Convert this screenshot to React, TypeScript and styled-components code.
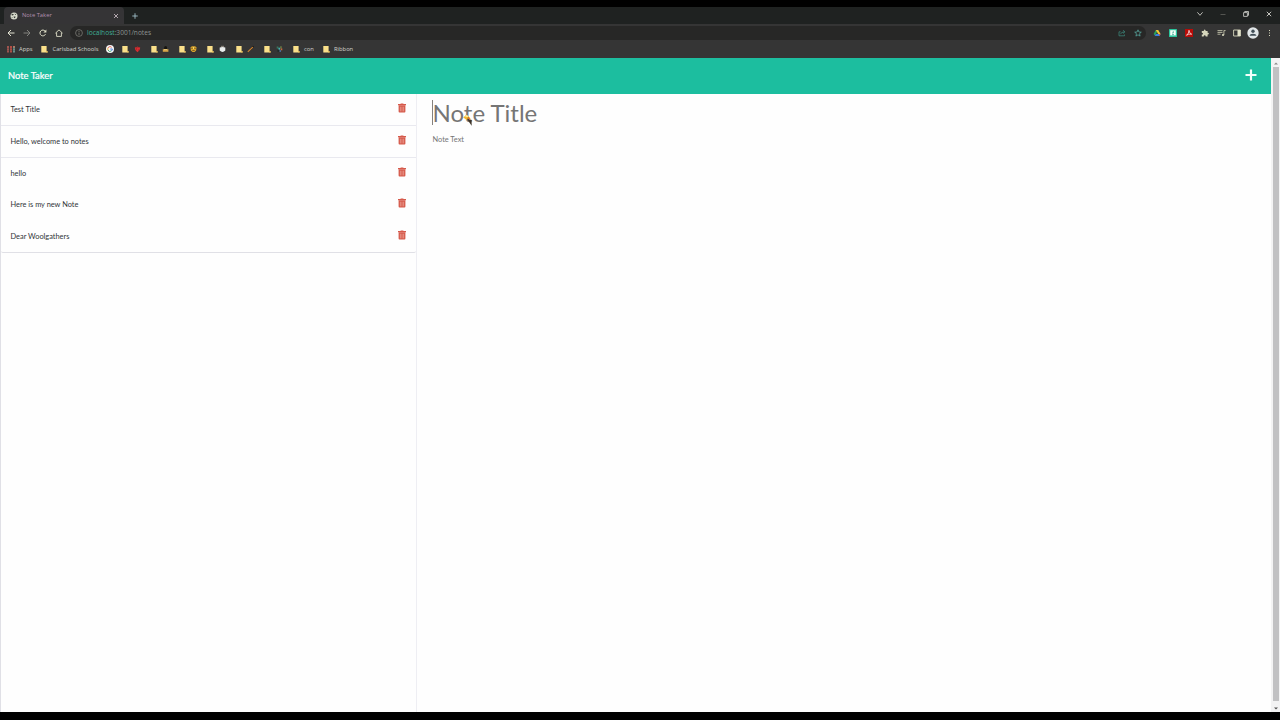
import React from "react";
import styled, { createGlobalStyle } from "styled-components";

const Global = createGlobalStyle`
  * { box-sizing: border-box; }
  body { margin: 0; background: #000; overflow: hidden; }
  svg { display: block; flex: none; }
`;

const Screen = styled.div`
  width: 1280px;
  height: 720px;
  padding: 7px 0 8px;
  background: #000;
  display: flex;
  flex-direction: column;
  font-family: Lato, sans-serif;
`;

/* ---------- browser chrome ---------- */
const TabStrip = styled.div`
  height: 17px;
  flex: none;
  background: #1f2221;
  display: flex;
  align-items: stretch;
  padding-left: 4px;
`;
const Tab = styled.div`
  width: 120px;
  background: #353436;
  border-radius: 4px 4px 0 0;
  display: flex;
  align-items: center;
  padding: 0 5px 0 6px;
  font: 5.8px/9px "Open Sans", sans-serif;
  color: #b38fae;
`;
const TabTitle = styled.span`
  margin-left: 4px;
  flex: 1;
  white-space: nowrap;
`;
const NewTab = styled.div`
  width: 22px;
  display: flex;
  align-items: center;
  justify-content: center;
`;
const WindowControls = styled.div`
  margin-left: auto;
  display: flex;
`;
const WindowButton = styled.div`
  width: 23px;
  display: flex;
  align-items: center;
  justify-content: center;
  padding: 0 0 3px 0;
`;
const Toolbar = styled.div`
  height: 17px;
  flex: none;
  background: #353535;
  display: flex;
  align-items: center;
  padding: 1px 3px 0;
`;
const ToolButton = styled.div`
  width: 16px;
  display: flex;
  align-items: center;
  justify-content: center;
`;
const Omnibox = styled.div`
  flex: 1;
  margin: 0 3px 0 3px;
  height: 14px;
  border-radius: 7px;
  background: #272726;
  display: flex;
  align-items: center;
  padding-left: 5px;
  font: 6.6px/10px "Open Sans", sans-serif;
  color: #8d9392;
`;
const Host = styled.span`
  margin-left: 4px;
  color: #3fae96;
`;
const OmniActions = styled.div`
  margin-left: auto;
  display: flex;
`;
const BookmarkBar = styled.div`
  height: 17px;
  flex: none;
  background: #353535;
  display: flex;
  align-items: center;
  padding: 0 0 1px 7px;
`;
const Bookmark = styled.div<{ $width: number; $gap?: number }>`
  width: ${(p) => p.$width}px;
  flex: none;
  display: flex;
  align-items: center;
  gap: ${(p) => p.$gap ?? 4.5}px;
  font: 5.8px/8px "Open Sans", sans-serif;
  color: #d3d3cd;
  white-space: nowrap;
`;

/* ---------- page ---------- */
const Viewport = styled.div`
  flex: 1;
  min-height: 0;
  display: flex;
  background: #fefefe;
`;
const Page = styled.div`
  flex: 1;
  display: flex;
  flex-direction: column;
`;
const Navbar = styled.header`
  height: 36px;
  flex: none;
  background: #1cbe9f;
  display: flex;
  align-items: center;
  justify-content: space-between;
  padding: 0 14.5px 2px 8px;
`;
const Brand = styled.span`
  color: #fff;
  font-size: 9.4px;
  line-height: 14px;
  padding-top: 2px;
  -webkit-text-stroke: 0.2px #fff;
`;
const Columns = styled.main`
  flex: 1;
  display: flex;
`;
const NoteColumn = styled.aside`
  width: 417px;
  border-left: 1px solid #e0e0e6;
  border-right: 1px solid #eeeef3;
`;
const NoteList = styled.ul`
  list-style: none;
  margin: 0;
  padding: 0;
  border-bottom: 1px solid #e0e0e6;
  border-radius: 0 0 2px 2px;
`;
const NoteRow = styled.li<{ $ruled: boolean; $height: number }>`
  height: ${(p) => p.$height}px;
  border-bottom: ${(p) => (p.$ruled ? "1px solid #e9e9ef" : "0")};
  display: flex;
  align-items: flex-start;
  justify-content: space-between;
  padding: 9px 10px 0 9.5px;
  color: #303438;
  font-size: 7.4px;
  line-height: 12px;
`;
const NoteName = styled.span`
  padding-top: 1px;
`;
const Editor = styled.section`
  padding: 3px 0 0 15px;
  color: #757575;
`;
const TitleField = styled.div`
  position: relative;
  height: 32px;
  font-size: 24px;
  line-height: 32px;
  padding-left: 0.5px;
`;
const Caret = styled.span`
  position: absolute;
  left: 0;
  top: 3px;
  width: 1px;
  height: 25px;
  background: #85817d;
`;
const Pointer = styled.span`
  position: absolute;
  left: 31px;
  top: 17px;
`;
const TextField = styled.div`
  margin-top: 5px;
  padding-left: 0.5px;
  font-size: 7.4px;
  line-height: 12px;
`;
const ScrollTrack = styled.div`
  width: 9px;
  padding: 0 1px 0 2px;
  background: #f3f3f4;
  display: flex;
  flex-direction: column;
  align-items: center;
`;
const ScrollArrow = styled.div`
  height: 9px;
  padding-top: 4px;
`;
const ScrollThumb = styled.div`
  width: 6px;
  flex: 1;
  margin-bottom: 2px;
  background: #c1c1c3;
`;

/* ---------- icons ---------- */
const Folder = () => (
  <svg width="7" height="8" viewBox="0 0 7 8">
    <path d="M.3 1h5.300v5.300h1v1.200H.3z" fill="#fbe08a" />
    <path d="M5.200 6.300h1.400v1.200H5.200z" fill="#e9ba4a" />
  </svg>
);
const Trash = () => (
  <svg width="8" height="10" viewBox="0 0 8 10">
    <path d="M2.600 1V.4h2.800V1H8v1.200H0V1z" fill="#d65a4b" />
    <path d="M.6 2.200h6.800V8.600q0 .9-.9.9h-5q-.9 0-.9-.9z" fill="#d65a4b" />
    <path d="M2.400 3.700v4.700M4 3.700v4.700M5.600 3.700v4.700" stroke="#f0b4a9" strokeWidth=".6" />
  </svg>
);
const Globe = () => (
  <svg width="8" height="8" viewBox="0 0 8 8">
    <circle cx="4" cy="4" r="3.500" fill="#d9dccd" />
    <path d="M1 3 2.600 1.800l1.300.8-1 1zM4.600 1.500l1.700 1-1.200.6zM3.600 4.400l2 .2-.6 1.600-1.100-.4zM1.200 5l1.200.3.4 1z" fill="#343936" />
  </svg>
);
const stroke = { fill: "none", strokeWidth: 1 };
const Back = ({ color }: { color: string }) => (
  <svg width="8" height="8" viewBox="0 0 8 8">
    <path d="M7.500 4H1M4 1 1 4l3 3" stroke={color} {...stroke} />
  </svg>
);
const Forward = () => (
  <svg width="8" height="8" viewBox="0 0 8 8">
    <path d="M.5 4H7M4 1l3 3-3 3" stroke="#83837f" {...stroke} />
  </svg>
);
const Reload = () => (
  <svg width="8" height="8" viewBox="0 0 8 8">
    <path d="M6.500 5.200A2.900 2.900 0 1 1 6.200 2.200" stroke="#dfdfc8" {...stroke} />
    <path d="M7.400.6v3H4.400z" fill="#dfdfc8" />
  </svg>
);
const Home = () => (
  <svg width="8" height="8" viewBox="0 0 8 8">
    <path d="M.4 4.200 4 .9l3.600 3.300M1.600 3.500v3.900h4.800V3.500" stroke="#dfdfc8" {...stroke} strokeWidth=".9" />
  </svg>
);
const Info = () => (
  <svg width="8" height="8" viewBox="0 0 8 8">
    <circle cx="4" cy="4" r="3.400" stroke="#85857f" fill="none" strokeWidth=".7" />
    <path d="M4 3.600v2.300M4 2v.9" stroke="#85857f" strokeWidth=".8" />
  </svg>
);
const Share = () => (
  <svg width="8" height="8" viewBox="0 0 8 8">
    <path d="M2.600 2.800H1v4h5.500V5.500M2.500 5.200Q3 2.900 6.500 2.900M5 1.200l1.900 1.700L5 4.500" stroke="#3d8f83" fill="none" strokeWidth=".7" />
  </svg>
);
const Star = () => (
  <svg width="8" height="8" viewBox="0 0 8 8">
    <path d="m4 .8.9 2.200 2.400.2-1.800 1.500.6 2.400L4 5.800 1.900 7.100l.6-2.400L.7 3.200 3.100 3z" stroke="#5cb3ab" fill="none" strokeWidth=".7" />
  </svg>
);
const Drive = () => (
  <svg width="8" height="8" viewBox="0 0 8 8">
    <path d="M2.800 1h2.400L2 6.800.6 5z" fill="#2c9f5a" />
    <path d="M2.800 1h2.400L7.600 5H5.200z" fill="#f3c42f" />
    <path d="M2.800 5h4.800L6.500 7H1.800z" fill="#397fe0" />
    <path d="M6 5h1.600l-1 2z" fill="#e04a36" />
  </svg>
);
const GreenExtension = () => (
  <svg width="8" height="8" viewBox="0 0 8 8">
    <rect width="8" height="8" rx=".6" fill="#2cc49c" />
    <path d="M1.200 1.200h5.600v5.200H1.200z" fill="#f4fff9" />
    <path d="M4.300 2.200v1.800H3.100M3 5.600h2" stroke="#2b9d87" fill="none" strokeWidth=".7" />
  </svg>
);
const Pdf = () => (
  <svg width="8" height="8" viewBox="0 0 8 8">
    <rect width="8" height="8" fill="#b80c08" />
    <path d="M1.500 6.300Q4 4.500 4 1.300 4.200 4.400 6.700 5.200 3.500 4.500 1.500 6.300z" stroke="#fff" fill="none" strokeWidth=".7" />
  </svg>
);
const Puzzle = () => (
  <svg width="8" height="8" viewBox="0 0 8 8">
    <path d="M.8 2h2Q2.600.4 3.700.4T4.600 2h2v1.700q1.300-.1 1.300.9t-1.300.9v2H4.700Q4.700 6.200 3.700 6.200T2.700 7.500H.8V5.600q1.200 0 1.200-.9T.8 3.800z" fill="#d5d5bb" />
  </svg>
);
const Playlist = () => (
  <svg width="9" height="8" viewBox="0 0 9 8">
    <path d="M.5 1.600h5M.5 3.400h5M.5 5.200h3M6.900 6V1.600h1.700" stroke="#d5d5bb" fill="none" strokeWidth=".8" />
    <circle cx="6" cy="6" r="1.100" fill="#d5d5bb" />
  </svg>
);
const SidePanel = () => (
  <svg width="8" height="8" viewBox="0 0 8 8">
    <path d="M.6 1h6.800v6H.6z" stroke="#d5d5bb" fill="none" strokeWidth=".9" />
    <path d="M4.500 1h2.900v6H4.500z" fill="#e2e2c9" />
  </svg>
);
const Avatar = () => (
  <svg width="12" height="12" viewBox="0 0 12 12">
    <circle cx="6" cy="6" r="5.700" fill="#e1e6e8" />
    <circle cx="6" cy="4.300" r="1.700" fill="#3f4d56" />
    <path d="M2.600 8.800Q2.800 6.700 6 6.700t3.400 2.100z" fill="#3f4d56" />
  </svg>
);
const Dots = () => (
  <svg width="8" height="8" viewBox="0 0 8 8">
    <path d="M4 .9h1v1H4zM4 3.500h1v1H4zM4 6.100h1v1H4z" fill="#dadac0" />
  </svg>
);
const AppsIcon = () => (
  <svg width="8" height="8" viewBox="0 0 8 8">
    <path d="M1 1v6.500" stroke="#c9635b" strokeWidth="1.400" strokeDasharray="1.900 .4" />
    <path d="M4 1v6.500" stroke="#e5594c" strokeWidth="1.400" strokeDasharray="1.900 .4" />
    <path d="M7 1v6.500" stroke="#7fb8ae" strokeWidth="1.400" strokeDasharray="1.900 .4" />
    <path d="M6.300 1h1.400v1.500H6.300z" fill="#d66b50" />
  </svg>
);
const GoogleIcon = () => (
  <svg width="8" height="8" viewBox="0 0 8 8">
    <circle cx="4" cy="4" r="4" fill="#f5f6f6" />
    <g fill="none" strokeWidth="1">
      <path d="M5.600 2.300A2.300 2.300 0 0 0 2 2.900" stroke="#dc5145" />
      <path d="M2 2.900a2.300 2.300 0 0 0 0 2.200" stroke="#e5b53c" />
      <path d="M2 5.100a2.300 2.300 0 0 0 3.400.8" stroke="#43a26b" />
      <path d="M5.400 5.900A2.300 2.300 0 0 0 6.300 4H4.200" stroke="#4a83dc" />
    </g>
  </svg>
);
const Strawberry = () => (
  <svg width="7" height="8" viewBox="0 0 7 8">
    <path d="M.8 2.600Q3.500 1.500 6.200 2.600 6.600 5 3.500 7.200.4 5 .8 2.600z" fill="#d62d31" />
    <path d="M2.200 2.500 3.500.9l1.300 1.600z" fill="#8c2926" />
    <path d="M2 4h1M4.300 5h1" stroke="#7d1b1d" strokeWidth=".7" />
  </svg>
);
const Hat = () => (
  <svg width="7" height="8" viewBox="0 0 7 8">
    <path d="M2.200 4V2l1-1 1.800.8V4z" fill="#15130e" />
    <path d="M.8 4.200h5.600v2.600H.8z" fill="#d3a146" />
    <path d="M2 4.300h3v.8H2z" fill="#f2d88a" />
  </svg>
);
const Bee = () => (
  <svg width="7" height="8" viewBox="0 0 7 8">
    <path d="M.5 2.200 2 1.300h3l1.500.9-.4 3.200-1.500 1.500H2.500L.8 5.400z" fill="#d9a52c" />
    <path d="M1.200 3.300h1.600M4.200 3.300h1.600M2.300 5.500h2.400" stroke="#6a4c20" strokeWidth=".8" />
    <path d="M3 2h1v2H3z" fill="#f5d869" />
  </svg>
);
const Cup = () => (
  <svg width="7" height="8" viewBox="0 0 7 8">
    <path d="M2 .8h3v1.700H2z" fill="#837d75" />
    <path d="M.7 2.600Q3.500 1.500 6.300 2.600v3Q5 7 3.500 7T.7 5.600z" fill="#e9ecec" />
  </svg>
);
const Brush = () => (
  <svg width="7" height="8" viewBox="0 0 7 8">
    <path d="M6.500 1.200 3.300 4.700" stroke="#1d1814" strokeWidth="1.300" />
    <path d="M5.800 2.100.8 6.900" stroke="#cf8534" strokeWidth="1.200" />
  </svg>
);
const Parrot = () => (
  <svg width="7" height="8" viewBox="0 0 7 8">
    <path d="M.7 1.500h1.700v2H.7z" fill="#38775c" />
    <path d="M2.400 2.700h1.700v2H2.400z" fill="#43aeb0" />
    <path d="M4.200 1.300h1.500v2.300H4.200z" fill="#6d7f45" />
    <path d="M4.700 3.400h1.600v1.900H4.700z" fill="#c4673e" />
    <path d="M1.400 4.800H3v2H1.400z" fill="#1d2a27" />
    <path d="M3.600 4.900h1.300v2H3.600z" fill="#4c6f9d" />
  </svg>
);
const Plus = ({ size, color, weight }: { size: number; color: string; weight: number }) => (
  <svg width={size} height={size} viewBox="0 0 12 12">
    <path d="M6 .5v11M.5 6h11" stroke={color} strokeWidth={weight} />
  </svg>
);
const PencilPointer = () => (
  <svg width="10" height="12" viewBox="0 0 10 12">
    <path d="M.2 3.500 3.400.8l3 2.200 1.400 2.300-2-.6-2 1.200z" fill="#f0b62e" />
    <path d="M2 2.200 3.800 1l1.700 1.200-1.500 1z" fill="#fff0a6" />
    <path d="M3.800 4.600 8.600 6v5.700L6.400 8.500z" fill="#3e3427" />
    <path d="M5 3.400 6.800 5.500" stroke="#cf5b2a" strokeWidth="1.100" />
  </svg>
);

const folders = [
  { icon: <Strawberry />, width: 28.5 },
  { icon: <Hat />, width: 28 },
  { icon: <Bee />, width: 28.5 },
  { icon: <Cup />, width: 28.5 },
  { icon: <Brush />, width: 28.5 },
  { icon: <Parrot />, width: 28.5 },
  { icon: "con", width: 30 },
  { icon: "Ribbon", width: 40 },
];

const notes = [
  { title: "Test Title", height: 32, ruled: true },
  { title: "Hello, welcome to notes", height: 32, ruled: true },
  { title: "hello", height: 31, ruled: false },
  { title: "Here is my new Note", height: 32, ruled: false },
  { title: "Dear Woolgathers", height: 31, ruled: false },
];

export default function App() {
  return (
    <Screen>
      <Global />
      <TabStrip>
        <Tab>
          <Globe />
          <TabTitle>Note Taker</TabTitle>
          <svg width="6" height="6" viewBox="0 0 6 6">
            <path d="m1 1 4 4M5 1 1 5" stroke="#c2b4bd" strokeWidth=".9" />
          </svg>
        </Tab>
        <NewTab>
          <Plus size={6} color="#9fc0c8" weight={1.8} />
        </NewTab>
        <WindowControls>
          <WindowButton>
            <svg width="8" height="6" viewBox="0 0 8 6">
              <path d="m1.400 1.300 2.600 3 2.600-3" stroke="#c9c9c4" fill="none" strokeWidth=".9" />
            </svg>
          </WindowButton>
          <WindowButton>
            <svg width="6" height="6" viewBox="0 0 6 6">
              <path d="M.5 3.500h5" stroke="#62625e" strokeWidth=".8" />
            </svg>
          </WindowButton>
          <WindowButton>
            <svg width="6" height="6" viewBox="0 0 6 6">
              <path d="M.6 1.600h3.800v3.800H.6zM1.700 1.300V.5h3.800v3.800h-.8" stroke="#d8d8d3" fill="none" strokeWidth=".8" />
            </svg>
          </WindowButton>
          <WindowButton>
            <svg width="6" height="6" viewBox="0 0 6 6">
              <path d="m.8.8 4.400 4.400M5.200.8.8 5.200" stroke="#d8d8d3" strokeWidth=".9" />
            </svg>
          </WindowButton>
        </WindowControls>
      </TabStrip>
      <Toolbar>
        <ToolButton><Back color="#e3e3d2" /></ToolButton>
        <ToolButton><Forward /></ToolButton>
        <ToolButton><Reload /></ToolButton>
        <ToolButton><Home /></ToolButton>
        <Omnibox>
          <Info />
          <Host>localhost</Host>:3001/notes
          <OmniActions>
            <ToolButton><Share /></ToolButton>
            <ToolButton><Star /></ToolButton>
          </OmniActions>
        </Omnibox>
        <ToolButton><Drive /></ToolButton>
        <ToolButton><GreenExtension /></ToolButton>
        <ToolButton><Pdf /></ToolButton>
        <ToolButton><Puzzle /></ToolButton>
        <ToolButton><Playlist /></ToolButton>
        <ToolButton><SidePanel /></ToolButton>
        <ToolButton><Avatar /></ToolButton>
        <ToolButton><Dots /></ToolButton>
      </Toolbar>
      <BookmarkBar>
        <Bookmark $width={34} $gap={4}><AppsIcon />Apps</Bookmark>
        <Bookmark $width={65}><Folder />Carlsbad Schools</Bookmark>
        <Bookmark $width={16}><GoogleIcon /></Bookmark>
        {folders.map((f, i) => (
          <Bookmark key={i} $width={f.width}><Folder />{f.icon}</Bookmark>
        ))}
      </BookmarkBar>
      <Viewport>
        <Page>
          <Navbar>
            <Brand>Note Taker</Brand>
            <Plus size={12} color="#f2fffb" weight={2.2} />
          </Navbar>
          <Columns>
            <NoteColumn>
              <NoteList>
                {notes.map((n) => (
                  <NoteRow key={n.title} $ruled={n.ruled} $height={n.height}>
                    <NoteName>{n.title}</NoteName>
                    <Trash />
                  </NoteRow>
                ))}
              </NoteList>
            </NoteColumn>
            <Editor>
              <TitleField>
                <Caret />
                Note Title
                <Pointer><PencilPointer /></Pointer>
              </TitleField>
              <TextField>Note Text</TextField>
            </Editor>
          </Columns>
        </Page>
        <ScrollTrack>
          <ScrollArrow>
            <svg width="4" height="3" viewBox="0 0 4 3"><path d="m0 2.500 2-2 2 2z" fill="#898989" /></svg>
          </ScrollArrow>
          <ScrollThumb />
          <ScrollArrow>
            <svg width="4" height="3" viewBox="0 0 4 3"><path d="m0 .5 2 2 2-2z" fill="#505050" /></svg>
          </ScrollArrow>
        </ScrollTrack>
      </Viewport>
    </Screen>
  );
}
